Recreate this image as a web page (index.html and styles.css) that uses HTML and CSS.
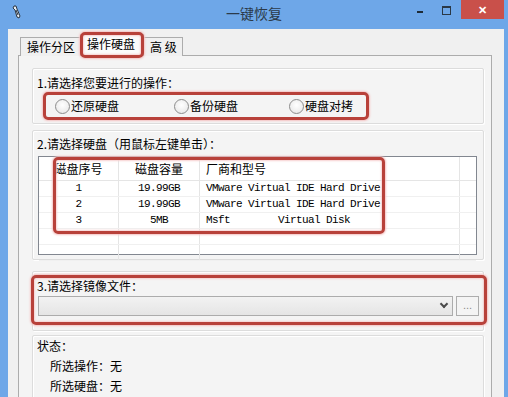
FILE: index.html
```html
<!DOCTYPE html>
<html lang="zh-CN">
  <head>
    <meta charset="UTF-8" />
    <title>一键恢复</title>
    <link rel="stylesheet" href="styles.css">
  </head>
  <body>
    <div class="titlebar">
      <svg class="app-icon" width="12" height="14" viewBox="0 0 12 14">
        <path d="M3 1 L5 1 L6 4 L9 11 L8 13 L6 12 L4 5 L2 3 Z" fill="#e8eef5" stroke="#2a3440" stroke-width="1"/>
        <path d="M5 5 L7 10" stroke="#2a3440" stroke-width="1"/>
      </svg>
      <div class="title">一键恢复</div>
      <div class="controls">
        <span class="ctl-min"></span>
        <span class="ctl-max"></span>
        <span class="ctl-close">✕</span>
      </div>
    </div>

    <div class="client">
      <div class="tabs">
        <div class="tab">操作分区</div>
        <div class="tab active">操作硬盘<span class="mark mark-tab"></span></div>
        <div class="tab">高 级</div>
      </div>

      <div class="panel">
        <div class="group g1">
          <div class="label">1.请选择您要进行的操作：</div>
          <div class="radios">
            <label class="radio"><span class="dot"></span>还原硬盘</label>
            <label class="radio"><span class="dot"></span>备份硬盘</label>
            <label class="radio"><span class="dot"></span>硬盘对拷</label>
          </div>
        </div>

        <div class="group g2">
          <div class="label">2.请选择硬盘（用鼠标左键单击）：</div>
          <div class="list">
            <div class="row head">
              <div class="c1">磁盘序号</div>
              <div class="c2">磁盘容量</div>
              <div class="c3">厂商和型号</div>
              <div class="c4"></div>
            </div>
            <div class="row">
              <div class="c1 mono">1</div>
              <div class="c2 mono">19.99GB</div>
              <div class="c3 mono">VMware Virtual IDE Hard Drive</div>
              <div class="c4"></div>
            </div>
            <div class="row">
              <div class="c1 mono">2</div>
              <div class="c2 mono">19.99GB</div>
              <div class="c3 mono">VMware Virtual IDE Hard Drive</div>
              <div class="c4"></div>
            </div>
            <div class="row">
              <div class="c1 mono">3</div>
              <div class="c2 mono">5MB</div>
              <div class="c3 mono">Msft        Virtual Disk</div>
              <div class="c4"></div>
            </div>
            <div class="row">
              <div class="c1"></div><div class="c2"></div><div class="c3"></div><div class="c4"></div>
            </div>
            <div class="row">
              <div class="c1"></div><div class="c2"></div><div class="c3"></div><div class="c4"></div>
            </div>
            <span class="mark mark-list"></span>
          </div>
        </div>

        <div class="group g3">
          <div class="label">3.请选择镜像文件：</div>
          <div class="file-row">
            <div class="combo"><span class="arrow"></span></div>
            <div class="browse">...</div>
          </div>
          <span class="mark mark-file"></span>
        </div>

        <div class="group g4">
          <div class="status">状态：</div>
          <div class="status sub">所选操作：无</div>
          <div class="status sub">所选硬盘：无</div>
        </div>
      </div>
    </div>
  </body>
</html>
```

FILE: styles.css
```css
body {
  margin: 0;
  width: 508px;
  height: 397px;
  overflow: hidden;
  background: #6ea7e8;
  font-family: "Noto Sans CJK SC", "Liberation Sans", sans-serif;
  font-size: 12px;
  color: #000;
}
.titlebar {
  height: 29px;
  position: relative;
  display: flex;
  align-items: flex-start;
}
.app-icon {
  margin: 5px 0 0 11px;
}
.title {
  position: absolute;
  left: 0;
  right: 0;
  top: 4px;
  text-align: center;
  font-size: 14px;
  line-height: 18px;
  color: #2b3a4a;
}
.controls {
  margin-left: auto;
  margin-right: 4px;
  display: flex;
  align-items: flex-start;
  position: relative;
}
.ctl-min {
  width: 6px;
  height: 2px;
  background: #1d2a36;
  margin: 11px 19px 0 0;
}
.ctl-max {
  width: 7px;
  height: 6px;
  border: 1px solid #2a3846;
  border-top-width: 2px;
  margin: 6px 10px 0 0;
}
.ctl-close {
  width: 43px;
  height: 19px;
  background: #c9504a;
  color: #fff;
  font-size: 11px;
  line-height: 19px;
  text-align: center;
  font-weight: bold;
}
.client {
  margin: 0 4px 0 8px;
  background: #f0f0f0;
  height: 368px;
  overflow: hidden;
}
.tabs {
  height: 26px;
  display: flex;
  align-items: flex-end;
  padding-left: 12px;
  position: relative;
  z-index: 1;
}
.tab {
  height: 18px;
  line-height: 17px;
  padding: 0 5px 0 6px;
  border: 1px solid #acacac;
  border-bottom: none;
  background: #f0f0f0;
  margin-bottom: -1px;
  margin-right: -1px;
}
.tab.active {
  height: 21px;
  line-height: 18px;
  background: #fbfbfb;
  padding: 0 8px 0 6px;
  position: relative;
  margin-bottom: -1px;
  z-index: 2;
}
.mark {
  position: absolute;
  border: 3px solid #b8413a;
  border-radius: 5px;
  box-shadow: 0 0 2px 1px #f5c3c3, inset 0 0 2px 1px #f7d0d0;
}
.mark-tab {
  left: -1px;
  top: -3px;
  width: 58px;
  height: 20px;
}
.panel {
  margin: 0 12px 0 10px;
  border: 1px solid #acacac;
  background: #f4f4f4;
  height: 360px;
  padding: 12px 7px 0 13px;
}
.group {
  border: 1px solid #dcdcdc;
  box-shadow: inset 1px 1px 0 #fff, 1px 1px 0 #fff;
  border-radius: 2px;
  padding-left: 4px;
  position: relative;
}
.label {
  line-height: 14px;
}
.g1 {
  padding-top: 7px;
  box-sizing: border-box;
  height: 56px;
}
.radios {
  margin: 2px 0 0 6px;
  width: 311px;
  height: 22px;
  border: 3px solid #b8413a;
  border-radius: 5px;
  box-shadow: 0 0 2px 1px #f5c3c3;
  display: grid;
  grid-template-columns: 119px 115px 1fr;
  align-items: center;
  padding-left: 9px;
}
.radio {
  display: flex;
  align-items: center;
  line-height: 14px;
}
.dot {
  width: 13px;
  height: 13px;
  border: 1px solid #8c8c8c;
  border-radius: 50%;
  background: radial-gradient(circle at 50% 40%, #ffffff, #e4e4e4);
  margin-right: 1px;
}
.g2 {
  margin-top: 6px;
  padding-top: 6px;
  height: 130px;
  box-sizing: border-box;
}
.list {
  margin: 5px 0 0 1px;
  width: 437px;
  height: 97px;
  border: 1px solid #828790;
  background: #fff;
  position: relative;
  overflow: visible;
}
.row {
  display: grid;
  grid-template-columns: 80px 81px 260px 1fr;
  height: 16px;
  border-bottom: 1px solid #f0f0f0;
  box-sizing: border-box;
}
.row.head {
  height: 24px;
  border-bottom: 1px solid #e5e5e5;
}
.row > div {
  border-right: 1px solid #e5e5e5;
  line-height: 15px;
  text-align: center;
  white-space: pre;
  overflow: hidden;
}
.row.head > div {
  line-height: 24px;
}
.row > .c3 {
  text-align: left;
  padding-left: 6px;
}
.row > .c4 {
  border-right: none;
}
.mono {
  font-family: "Liberation Mono", "DejaVu Sans Mono", monospace;
  font-size: 11px;
  letter-spacing: -0.6px;
}
.mark-list {
  left: 14px;
  top: 0;
  width: 326px;
  height: 71px;
}
.g3 {
  margin-top: 11px;
  height: 60px;
  box-sizing: border-box;
  padding-top: 7px;
}
.file-row {
  display: flex;
  margin-top: 3px;
  margin-left: 1px;
}
.combo {
  width: 413px;
  height: 18px;
  border: 1px solid #acacac;
  background: linear-gradient(#f2f2f2, #e5e5e5);
  position: relative;
}
.arrow {
  position: absolute;
  right: 5px;
  top: 4px;
  width: 4px;
  height: 4px;
  border-right: 2px solid #4a4a4a;
  border-bottom: 2px solid #4a4a4a;
  transform: rotate(45deg);
}
.browse {
  margin-left: 3px;
  width: 21px;
  height: 18px;
  border: 1px solid #adadad;
  background: #f4f4f4;
  color: #8a8a8a;
  text-align: center;
  line-height: 16px;
  font-family: "Liberation Sans", sans-serif;
  font-size: 11px;
}
.mark-file {
  left: -2px;
  top: 3px;
  width: 450px;
  height: 44px;
}
.g4 {
  margin-top: 4px;
  height: 80px;
  box-sizing: border-box;
}
.status {
  line-height: 20px;
}
.status.sub {
  padding-left: 13px;
}
```
